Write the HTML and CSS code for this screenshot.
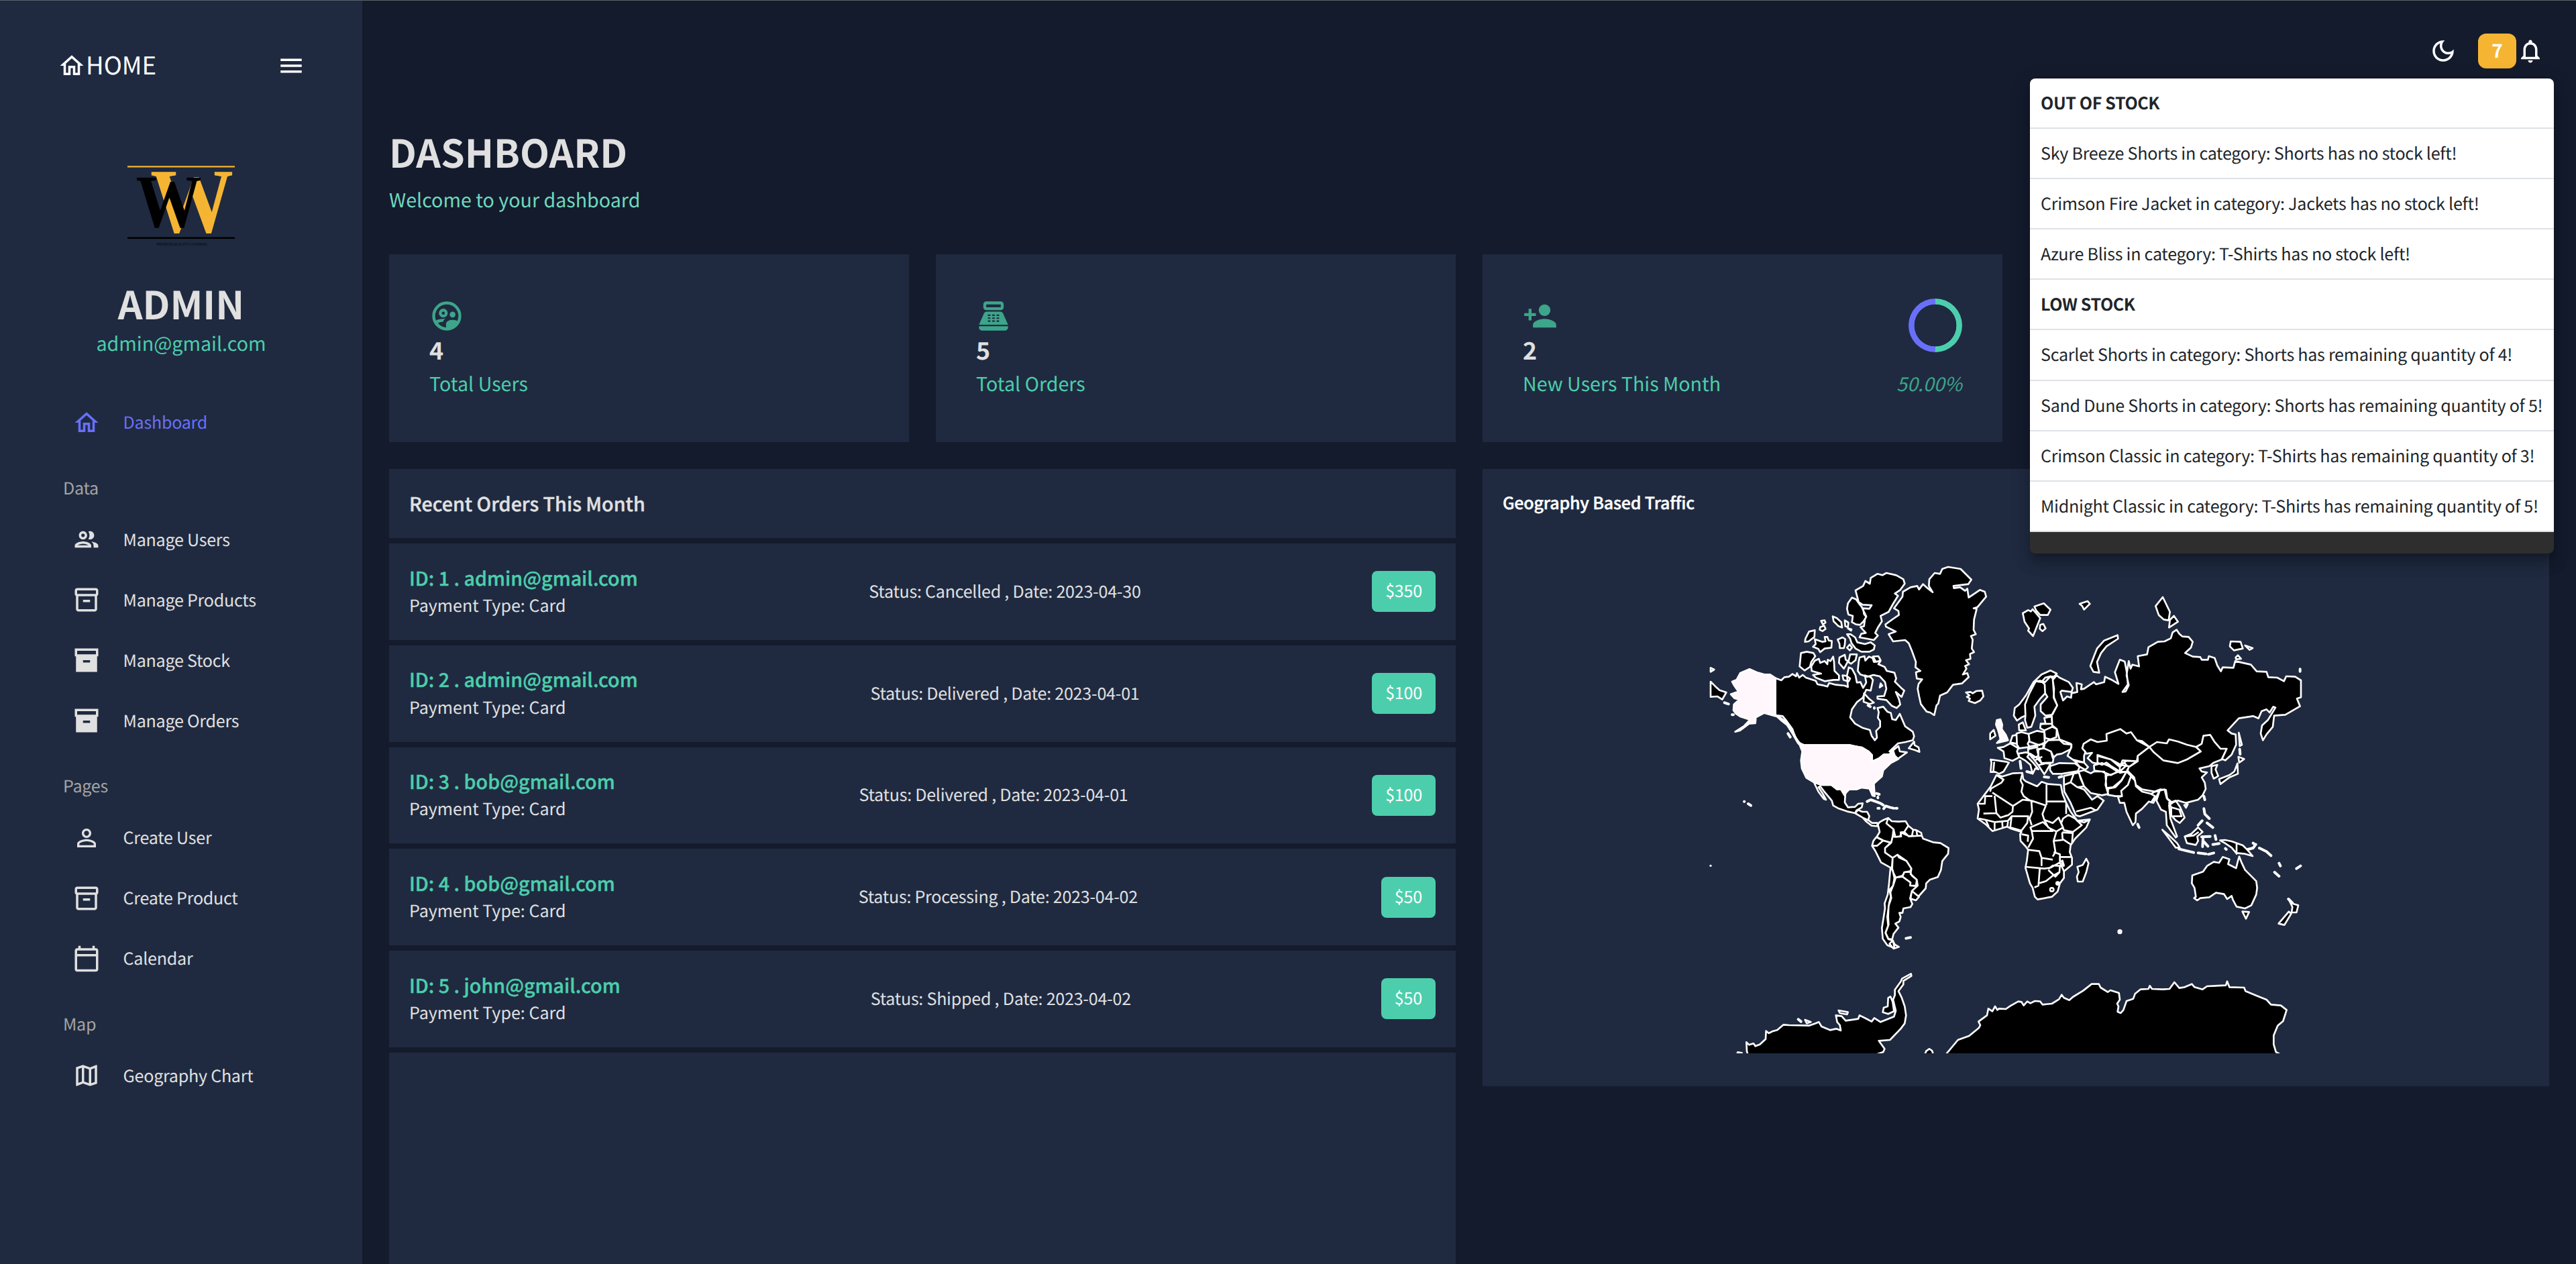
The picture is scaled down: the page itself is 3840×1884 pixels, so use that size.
FILE: index.html
```html
<!DOCTYPE html>
<html lang="en">
<head>
<meta charset="utf-8">
<title>Dashboard</title>
<link rel="stylesheet" href="styles.css">
</head>
<body>
<svg class="sprite" aria-hidden="true">
  <symbol id="i-home" viewBox="0 0 24 24"><path d="m12 5.69 5 4.5V18h-2v-6H9v6H7v-7.81l5-4.5M12 3 2 12h3v8h6v-6h2v6h6v-8h3L12 3z"/></symbol>
  <symbol id="i-menu" viewBox="0 0 24 24"><path d="M3 18h18v-2H3v2zm0-5h18v-2H3v2zm0-7v2h18V6H3z"/></symbol>
  <symbol id="i-people" viewBox="0 0 24 24"><path d="M9 13.75c-2.34 0-7 1.17-7 3.5V19h14v-1.75c0-2.33-4.66-3.5-7-3.5zM4.34 17c.84-.58 2.87-1.25 4.66-1.25s3.82.67 4.66 1.25H4.34zM9 12c1.93 0 3.5-1.57 3.5-3.5S10.93 5 9 5 5.5 6.57 5.5 8.5 7.07 12 9 12zm0-5c.83 0 1.5.67 1.5 1.5S9.83 10 9 10s-1.5-.67-1.5-1.5S8.17 7 9 7zm7.04 6.81c1.16.84 1.96 1.96 1.96 3.44V19h4v-1.75c0-2.02-3.5-3.17-5.96-3.44zM15 12c1.93 0 3.5-1.57 3.5-3.5S16.93 5 15 5c-.54 0-1.04.13-1.5.35.63.89 1 1.98 1 3.15s-.37 2.26-1 3.15c.46.22.96.35 1.5.35z"/></symbol>
  <symbol id="i-box" viewBox="0 0 24 24"><path d="M20 2H4c-1 0-2 .9-2 2v3.01c0 .72.43 1.34 1 1.69V20c0 1.1 1.1 2 2 2h14c.9 0 2-.9 2-2V8.7c.57-.35 1-.97 1-1.69V4c0-1.1-1-2-2-2zm-1 18H5V9h14v11zm1-13H4V4h16v3zM9 12h6v2H9z"/></symbol>
  <symbol id="i-box-solid" viewBox="0 0 24 24"><path d="M2 2v6.7h1V22h18V8.7h1V2H2zm13 12H9v-2h6v2zm5-7H4V4h16v3z"/></symbol>
  <symbol id="i-person" viewBox="0 0 24 24"><path d="M12 5.9c1.16 0 2.1.94 2.1 2.1s-.94 2.1-2.1 2.1S9.9 9.16 9.9 8s.94-2.1 2.1-2.1m0 9c2.97 0 6.1 1.46 6.1 2.1v1.1H5.9V17c0-.64 3.13-2.1 6.1-2.1M12 4C9.79 4 8 5.79 8 8s1.79 4 4 4 4-1.79 4-4-1.79-4-4-4zm0 9c-2.67 0-8 1.34-8 4v3h16v-3c0-2.66-5.33-4-8-4z"/></symbol>
  <symbol id="i-calendar" viewBox="0 0 24 24"><path d="M20 3h-1V1h-2v2H7V1H5v2H4c-1.1 0-2 .9-2 2v16c0 1.1.9 2 2 2h16c1.1 0 2-.9 2-2V5c0-1.1-.9-2-2-2zm0 18H4V10h16v11zm0-13H4V5h16v3z"/></symbol>
  <symbol id="i-map" viewBox="0 0 24 24"><path d="M20.5 3l-.16.03L15 5.1 9 3 3.36 4.9c-.21.07-.36.25-.36.48V20.5c0 .28.22.5.5.5l.16-.03L9 18.9l6 2.1 5.64-1.9c.21-.07.36-.25.36-.48V3.5c0-.28-.22-.5-.5-.5zM10 5.47l4 1.4v11.66l-4-1.4V5.47zm-5 .99l3-1.01v11.7l-3 1.16V6.46zm14 11.08l-3 1.01V6.86l3-1.16v11.84z"/></symbol>
  <symbol id="i-moon" viewBox="0 0 24 24"><path d="M9.37 5.51c-.18.64-.27 1.31-.27 1.99 0 4.08 3.32 7.4 7.4 7.4.68 0 1.35-.09 1.99-.27C17.45 17.19 14.93 19 12 19c-3.86 0-7-3.14-7-7 0-2.93 1.81-5.45 4.37-6.49zM12 3c-4.97 0-9 4.03-9 9s4.03 9 9 9 9-4.03 9-9c0-.46-.04-.92-.1-1.36-.98 1.37-2.58 2.26-4.4 2.26-2.98 0-5.4-2.42-5.4-5.4 0-1.81.89-3.42 2.26-4.4-.44-.06-.9-.1-1.36-.1z"/></symbol>
  <symbol id="i-bell" viewBox="0 0 24 24"><path d="M12 22c1.1 0 2-.9 2-2h-4c0 1.1.9 2 2 2zm6-6v-5c0-3.07-1.63-5.64-4.5-6.32V4c0-.83-.67-1.5-1.5-1.5s-1.5.67-1.5 1.5v.68C7.64 5.36 6 7.92 6 11v5l-2 2v1h16v-1l-2-2zm-2 1H8v-6c0-2.48 1.51-4.5 4-4.5s4 2.02 4 4.5v6z"/></symbol>
  <symbol id="i-users" viewBox="0 0 24 24"><circle cx="12" cy="12" r="9" fill="none" stroke="currentColor" stroke-width="2"/><circle cx="9.6" cy="10" r="2.05" fill="none" stroke="currentColor" stroke-width="2"/><circle cx="16" cy="11" r="2"/><path d="M3.6 15.6C5.3 14.5 7.6 14 9.6 14c.5 0 .9 0 1.4.1-.9.5-1.4 1.1-1.6 1.9-1.4 0-2.7.4-3.5.9 1.4 1.8 3.3 2.9 5.6 3.1V17.5c0-1.9 2.7-2.8 4.5-2.8 1.5 0 3.4.5 4.2 1.5-1.3 2.9-4.4 5-8.2 5-4 0-7-2.2-8.4-5.6z"/></symbol>
  <symbol id="i-register" viewBox="0 0 24 24"><path fill-rule="evenodd" d="M17 2H7c-1.1 0-2 .9-2 2v2c0 1.1.9 2 2 2h10c1.1 0 2-.9 2-2V4c0-1.1-.9-2-2-2zm0 4H7V4h10v2zm3 16H4c-1.1 0-2-.9-2-2v-1h20v1c0 1.1-.9 2-2 2zm-1.47-11.81C18.21 9.47 17.49 9 16.7 9H7.3c-.79 0-1.51.47-1.83 1.19L2 18h20l-3.47-7.81z"/><g stroke="#1f2a40" stroke-linecap="round"><path d="M8.5 11.5h1M11.5 11.5h1M14.5 11.5h1M8.5 13.5h1M11.5 13.5h1M14.5 13.5h1M8.5 15.5h1M11.5 15.5h1M14.5 15.5h1"/></g></symbol>
  <symbol id="i-add" viewBox="0 0 24 24"><path d="M15 12c2.21 0 4-1.79 4-4s-1.79-4-4-4-4 1.79-4 4 1.79 4 4 4zm-9-2V7H4v3H1v2h3v3h2v-3h3v-2H6zm9 4c-2.67 0-8 1.34-8 4v2h16v-2c0-2.66-5.33-4-8-4z"/></symbol>
</svg>

<div class="app">
  <aside class="sidebar">
    <div class="brand">
      <svg class="icon"><use href="#i-home"/></svg>
      <span class="brand-name">HOME</span>
      <svg class="icon brand-toggle"><use href="#i-menu"/></svg>
    </div>
    <svg class="logo" viewBox="170 196 200 200">
      <path d="M190 248.4h160" stroke="#f5b533" stroke-width="2.4"/>
      <text class="logo-letter" transform="translate(224 346) scale(.905 1)" font-size="137" fill="#f5b533">W</text>
      <text class="logo-letter" transform="translate(202.6 338.2) scale(.875 1)" font-size="112" fill="#000">W</text>
      <path d="M190 354.8h160" stroke="#000" stroke-width="2.4"/>
      <text class="logo-letter" x="233" y="366.4" font-size="6" textLength="76" lengthAdjust="spacingAndGlyphs" fill="#0b0f18">PREMIUM QUALITY CLOTHING</text>
    </svg>
    <div class="user-name">ADMIN</div>
    <div class="user-mail">admin@gmail.com</div>
    <nav class="menu">
      <a class="item active"><svg class="icon"><use href="#i-home"/></svg><span>Dashboard</span></a>
      <div class="group">Data</div>
      <a class="item"><svg class="icon"><use href="#i-people"/></svg><span>Manage Users</span></a>
      <a class="item"><svg class="icon"><use href="#i-box"/></svg><span>Manage Products</span></a>
      <a class="item"><svg class="icon"><use href="#i-box-solid"/></svg><span>Manage Stock</span></a>
      <a class="item"><svg class="icon"><use href="#i-box-solid"/></svg><span>Manage Orders</span></a>
      <div class="group">Pages</div>
      <a class="item"><svg class="icon"><use href="#i-person"/></svg><span>Create User</span></a>
      <a class="item"><svg class="icon"><use href="#i-box"/></svg><span>Create Product</span></a>
      <a class="item"><svg class="icon"><use href="#i-calendar"/></svg><span>Calendar</span></a>
      <div class="group">Map</div>
      <a class="item"><svg class="icon"><use href="#i-map"/></svg><span>Geography Chart</span></a>
    </nav>
  </aside>

  <main class="main">
    <div class="topbar">
      <svg class="icon moon"><use href="#i-moon"/></svg>
      <span class="count">7</span>
      <svg class="icon"><use href="#i-bell"/></svg>
    </div>
    <h1 class="title">DASHBOARD</h1>
    <p class="subtitle">Welcome to your dashboard</p>

    <div class="grid">
      <section class="card">
        <div class="stat"><svg class="stat-icon"><use href="#i-users"/></svg><b>4</b><span>Total Users</span></div>
      </section>
      <section class="card">
        <div class="stat"><svg class="stat-icon"><use href="#i-register"/></svg><b>5</b><span>Total Orders</span></div>
      </section>
      <section class="card">
        <div class="stat"><svg class="stat-icon"><use href="#i-add"/></svg><b>2</b><span>New Users This Month</span></div>
        <div class="progress"><div class="ring"></div><i>50.00%</i></div>
      </section>

      <section class="orders">
        <h2 class="orders-title">Recent Orders This Month</h2>
        <div class="order"><div><div class="order-id">ID: 1 . admin@gmail.com</div><div class="order-pay">Payment Type: Card</div></div><div class="order-status">Status: Cancelled , Date: 2023-04-30</div><div class="price">$350</div></div>
        <div class="order"><div><div class="order-id">ID: 2 . admin@gmail.com</div><div class="order-pay">Payment Type: Card</div></div><div class="order-status">Status: Delivered , Date: 2023-04-01</div><div class="price">$100</div></div>
        <div class="order"><div><div class="order-id">ID: 3 . bob@gmail.com</div><div class="order-pay">Payment Type: Card</div></div><div class="order-status">Status: Delivered , Date: 2023-04-01</div><div class="price">$100</div></div>
        <div class="order"><div><div class="order-id">ID: 4 . bob@gmail.com</div><div class="order-pay">Payment Type: Card</div></div><div class="order-status">Status: Processing , Date: 2023-04-02</div><div class="price">$50</div></div>
        <div class="order"><div><div class="order-id">ID: 5 . john@gmail.com</div><div class="order-pay">Payment Type: Card</div></div><div class="order-status">Status: Shipped , Date: 2023-04-02</div><div class="price">$50</div></div>
      </section>

      <section class="geo">
        <h2 class="geo-title">Geography Based Traffic</h2>
        <svg class="map" viewBox="2210 800 1590 770">
          <!-- Americas and Greenland -->
          <g transform="translate(2520 820) scale(.33333)">
            <path class="land" d="M1083 188 1066 160 1068 130 1092 102 1116 106 1126 84 1152 75 1208 84 1256 132 1242 152 1176 160 1178 170 1206 166 1228 182 1238 172 1244 212 1294 178 1316 186 1322 208 1284 254 1266 260 1280 262 1268 310 1266 356 1276 376 1254 384 1262 400 1258 440 1268 456 1250 464 1252 486 1232 492 1246 510 1228 518 1234 530 1218 556 1238 550 1244 568 1214 596 1174 602 1148 636 1116 650 1108 686 1100 694 1090 738 1072 726 1056 722 1030 688 1022 652 1016 620 1020 598 1036 578 1012 574 1008 546 1028 540 1006 524 1008 500 990 450 976 416 960 402 906 408 886 376 918 364 874 342 872 332 908 306 932 290 930 272 910 260 948 208 950 186 984 166 1014 160 1022 176 1040 152 1060 170z
            M1232 636 1252 634 1262 640 1278 630 1304 628 1310 654 1296 672 1272 684 1244 674 1250 664 1236 656 1248 650z
            M738 180 772 160 782 138 802 150 806 124 836 106 858 112 876 102 920 112 952 130 958 150 938 178 914 194 928 204 906 240 886 276 850 294 856 318 838 346 826 370 838 382 820 402 790 396 756 390 764 374 784 370 760 344 776 340 780 310 786 296 768 260 800 262 810 246 770 244 752 232z
            M722 212 740 220 756 242 772 262 776 286 786 298 774 318 758 334 740 332 722 322 726 294 706 288 700 262 704 238z
            M636 296 654 304 674 322 678 346 662 340 640 318zM690 314 706 324 704 344 692 340zM704 350 720 354 718 360zM584 316 600 314 604 324 592 332zM580 344 598 338 604 352 590 362 578 356z
            M530 364 556 358 554 388 528 408 512 410 514 396zM556 398 590 410 604 408 600 388 612 388 618 404 632 406 630 436 600 440 580 456 572 442 548 432 560 420z
            M658 400 680 390 692 398 690 422 686 438 668 438 666 418zM700 436 712 422 722 436 712 448z
            M700 376 716 376 736 390 746 412 780 420 806 412 824 426 820 444 800 454 764 454 738 440 720 416 714 396z
            M494 460 520 454 550 460 558 474 540 500 534 522 510 538 488 520z
            M540 520 556 494 574 486 580 504 600 496 612 510 614 490 626 496 638 476 642 500 644 540 664 560 664 580 640 580 600 586 560 570 548 558 584 552 542 540z
            M666 480 690 468 694 490 704 496 694 516 686 530 664 504zM714 466 744 466 738 492 718 508 706 500zM680 560 698 562 714 574 706 588 684 580z
            M756 480 778 474 782 494 798 476 814 482 820 500 850 496 840 510 868 522 878 540 912 548 920 574 914 588 946 620 956 628 944 656 918 634 932 666 938 690 922 706 900 696 876 670 836 664 836 654 866 652 876 620 870 590 846 564 818 558 790 566 760 556 748 540 752 500z
            M776 640 796 662 820 682 802 688 774 678zM850 596 858 606 846 614zM816 476 840 474 850 492 830 500z
            M380 572 406 582 420 568 440 566 456 554 472 564 476 550 486 570 502 558 516 570 560 584 568 600 590 604 612 610 620 594 650 602 690 606 704 612 700 560 708 524 722 530 738 560 744 592 760 590 772 616 786 592 780 560 806 568 816 580 806 628 786 624 770 660 744 680 722 712 714 748 736 776 768 794 802 804 810 830 824 850 834 838 830 808 848 790 848 764 838 750 842 724 836 706 862 700 880 722 896 728 902 756 918 760 936 732 960 788 994 812 1000 832 994 850 962 858 928 864 890 900 902 898 930 876 936 900 968 904 926 934 912 918 890 914 864 914 844 930 810 946 812 916 796 900 766 882 730 876 712 872 510 872 486 862 464 828 456 800 430 764 412 742 380 738z
            M1000 856 1002 872 1020 882 1024 902 1004 894 976 886z
            M90 588 110 608 130 626 160 636 142 668 120 654 90 656zM90 526 106 534 90 544z
            M552 1038 586 1050 630 1050 656 1070 672 1068 692 1098 690 1128 704 1150 736 1148 750 1134 770 1132 766 1150 742 1164 736 1176 700 1168 660 1154 638 1142 632 1120 600 1082 580 1056 572 1060 592 1090 606 1116 596 1112 572 1080z
            M736 1176 750 1162 768 1170 790 1170 800 1190 794 1208 770 1196zM770 1196 796 1208 812 1220 836 1220 836 1234 810 1232 784 1212z
            M846 1216 864 1206 884 1198 876 1222 908 1248 904 1280 898 1306 894 1308 860 1298 832 1284 846 1260 838 1226z
            M884 1198 900 1212 930 1214 962 1212 974 1232 956 1260 942 1262 938 1280 916 1282 908 1248 876 1222z
            M974 1232 996 1250 1010 1252 1032 1264 1034 1276 976 1280 956 1260zM996 1250 990 1278M1010 1252 1014 1276
            M832 1282 862 1298 834 1322 812 1322 818 1300zM812 1322 834 1322 862 1298 898 1308 870 1332 870 1352 904 1376 902 1424 852 1396 826 1344z
            M898 1306 904 1280 916 1282 942 1280 940 1262 976 1278 1034 1276 1040 1290 1084 1306 1118 1310 1154 1332 1152 1358 1126 1390 1120 1430 1106 1462 1070 1474 1054 1490 1052 1512 1020 1548 990 1524 1016 1500 1012 1474 984 1448 988 1424 966 1390 932 1374 926 1362 904 1376 870 1352 870 1332z
            M904 1376 926 1362 966 1390 988 1424 982 1438 956 1440 948 1456 918 1464 908 1444 900 1424zM956 1440 982 1436 990 1456 1012 1474 1008 1502 982 1500 984 1486 948 1460z
            M918 1464 948 1460 984 1486 982 1500 1016 1500 990 1524 982 1558 992 1582 984 1596 952 1602 948 1622 934 1622 940 1640 934 1660 916 1670 930 1688 908 1716 902 1740 884 1738 872 1712 884 1680 880 1640 888 1580 896 1550 890 1520 906 1500z
            M990 1524 1022 1550 1008 1566 984 1558z
            M894 1424 904 1430 912 1466 906 1500 894 1530 898 1556 886 1590 884 1640 886 1674 872 1710 886 1740 906 1746 912 1780 880 1766 860 1738 856 1690 864 1640 870 1600 868 1580 882 1540 888 1490zM904 1746 914 1764 932 1774 908 1782 890 1760z
            M260 2270 252 2240 250 2200 262 2212 282 2206 290 2218 310 2210 336 2186 338 2150 350 2160 366 2152 388 2146 416 2122 440 2124 530 2126 560 2116 574 2110 586 2130 624 2146 652 2140 672 2148 668 2124 656 2110 650 2080 676 2084 694 2104 750 2096 756 2080 784 2094 810 2108 822 2092 850 2110 910 2086 918 2060 906 2010 914 1990 914 1966 940 1930 946 1916 986 1894 988 1904 952 1926 952 1942 930 1972 944 2000 958 2040 964 2080 958 2116 940 2140 892 2190 842 2194 868 2230 862 2244 838 2252 830 2270z
            M884 2002 894 1996 904 2020 910 2062 884 2074 860 2066 864 2046 882 2040zM662 2058 704 2066 700 2076 668 2070zM512 2100 538 2110 520 2116zM1048 2256 1054 2240 1068 2230 1080 2238 1086 2256z"/>
            <path class="land hot" d="M510 872 712 872 740 878 768 884 798 902 812 918 812 946 844 932 864 914 890 914 904 890 914 920 930 934 896 952 862 984 856 1012 820 1044 824 1100 814 1098 800 1066 764 1062 742 1070 710 1070 696 1084 690 1098 672 1068 656 1070 630 1050 586 1050 552 1038 518 1018 498 976 494 940 500 900 490 876z
            M380 572 356 556 330 556 296 546 264 532 222 550 206 580 186 588 196 606 214 632 180 644 196 662 218 668 194 690 192 716 202 730 222 744 248 752 266 758 240 786 200 812 222 806 262 776 290 774 292 748 330 728 364 738 400 748 428 768 456 804 474 846 492 866 500 884 480 862 456 820 432 782 404 760 380 738z"/>
            <path class="isle" d="M436 820 446 836M240 1124h1M258 1134 270 1142M152 682 170 688M186 736h6M790 1124 806 1116 850 1132 862 1140M838 1154h6M864 1156 874 1144 892 1150 908 1154M918 1154h6M832 1088 844 1092M838 1104v4M964 1736 984 1732M794 694 804 700M822 704v3M482 2098 494 2108M212 2247 228 2250"/>
            <circle cx="90" cy="1411" r="5" fill="#fff"/>
          </g>
          <!-- Europe, Asia, Africa -->
          <g transform="translate(2960 820) scale(.33333)">
            <path class="land" d="M318 560 330 570 372 590 390 616 384 634 340 628 334 634 346 672 364 654 382 660 384 640 410 634 406 594 430 600 426 622 440 620 484 590 494 600 530 590 534 566 560 578 594 598 578 546 600 490 622 498 630 540 636 600 612 634 626 632 640 604 630 560 636 520 640 496 648 530 656 512 686 520 680 474 722 466 728 434 770 410 800 408 828 394 836 368 854 356 866 374 880 386 908 388 926 410 918 436 892 460 926 476 960 478 966 490 994 490 998 474 1024 482 1036 516 1052 542 1060 524 1108 526 1116 496 1186 512 1212 542 1256 544 1264 568 1304 570 1334 586 1344 564 1384 566 1410 582 1410 658 1392 664 1406 698 1340 736 1290 740 1284 790 1256 824 1240 850 1230 820 1236 784 1262 760 1296 704 1286 700 1270 726 1256 712 1234 720 1220 752 1196 742 1132 752 1082 806 1100 820 1118 824 1120 870 1100 914 1072 940 1056 934 1078 888 1050 888 1024 858 1004 826 974 830 966 866 940 880 900 870 860 856 820 846 810 864 766 858 732 880 700 854 676 850 650 814 630 820 602 800 540 822 542 852 500 858 470 846 438 866 432 886 446 902 440 920 440 950 400 944 366 920 384 880 382 866 330 846 318 800 298 784 294 740 320 694 304 660 306 620 300 580z
            M130 706 150 690 180 650 214 590 250 556 290 538 318 552 306 566 290 564 266 570 250 590 224 586 196 640 176 690 178 740 160 748 140 762 126 740z
            M178 740 176 690 196 640 224 586 246 584 264 600 266 640 244 664 218 700 222 740 204 790 186 794 176 760z
            M246 584 266 590 290 564 300 575 306 660 320 694 298 736 268 740 246 720 246 690 276 656 266 640 264 600z
            M148 780 166 770 180 806 150 806zM262 750 296 744 298 790 318 800 316 836 290 846 266 840 262 806 244 796 246 776 268 776zM246 778 296 776M262 806 298 790
            M138 820 160 814 192 822 196 850 188 866 196 880 150 886 140 870zM192 822 230 808 262 814 264 860 240 872 196 856zM264 866 280 850 330 848 350 866 384 870 380 890 340 910 318 914 300 930 292 900 260 886z
            M230 890 260 886 292 900 304 926 300 950 250 952 236 920zM190 880 230 872 260 866 256 886 236 892 236 920 210 930 190 905zM190 890 232 880
            M146 910 180 904 196 910 186 924 212 950 236 980 222 976 210 1000 200 960 176 940 150 925zM200 910 230 930 250 952 290 955 270 990 262 1002 240 968 216 936zM220 940 250 925M240 960 262 955
            M54 884 80 880 110 864 146 886 140 900 150 926 120 942 84 930 80 900zM110 860 120 830 138 826 140 866zM22 936 90 946 104 950 80 990 60 1000 44 992 22 992 26 950zM38 950 34 990M20 820 36 804 44 830 20 846z
            M288 966 330 952 400 954 420 970 412 988 340 1000 300 1000 288 984zM394 938 440 950 458 970 446 982 420 968z
            M438 866 470 846 500 858 542 852 540 822 602 800 630 820 650 814 676 850 732 880 680 920 676 944 630 942 604 960 560 936 500 920 500 955 478 950 456 930 476 906 450 910 446 902 432 886z
            M500 916 560 936 600 970 620 950 630 962 600 990 560 965 540 950 520 960 500 950zM484 962 520 952 550 965 590 990 560 1006 520 990 486 986zM600 970 612 940 676 944 640 970 630 990 600 996zM600 960 640 966
            M416 990 440 984 470 998 484 990 530 990 540 1010 536 1050 548 1090 520 1096 470 1086 440 1056 424 1020zM536 1008 560 1004 590 992 630 990 606 1030 570 1060 540 1064zM548 1066 580 1060 608 1030 630 990 650 1010 636 1050 606 1076 610 1100 580 1100 546 1094z
            M636 1050 650 1012 668 1030 672 1056 700 1080 740 1090 760 1078 780 1070 770 1090 750 1130 730 1124 700 1156 672 1178 670 1216 658 1230 630 1170 620 1130 600 1130 592 1104 610 1100 606 1076zM734 1088 758 1100 740 1128
            M732 880 752 904 794 940 860 952 900 936 962 900 942 880 966 866 974 830 1004 826 1024 858 1050 888 1078 888 1056 936 1020 950 1000 966 956 976 966 990 990 994 966 1016 980 1040 984 1068 970 1096 950 1116 896 1130 860 1120 830 1130 810 1110 800 1070 760 1080 700 1070 672 1050 664 1016 634 986 640 970 680 944 680 920z
            M732 880 766 858 810 864 820 846 860 856 900 870 940 880 962 900 900 936 860 952 794 940 752 904z
            M1010 966 1036 960 1028 980 1040 1010 1020 1022 1010 996zM1130 924 1156 934 1134 950zM1126 954 1128 1000 1090 1016 1050 1046 1044 1024 1090 1006 1112 990zM1132 816 1146 870 1136 876z
            M780 1070 806 1072 812 1110 836 1130 820 1140 826 1200 856 1280 850 1285 810 1230 806 1170 784 1160 764 1120zM820 1130 850 1120 870 1150 890 1196 868 1220 850 1208 830 1186 830 1150zM830 1150 866 1160 876 1190 840 1190
            M888 1140 904 1136 896 1152zM790 1250 820 1276 856 1310 868 1330 850 1330 820 1290zM890 1280 920 1268 950 1240 970 1260 946 1280 950 1300 940 1318 900 1310zM896 1280 930 1276 950 1262
            M350 1050 380 1038 410 1060 440 1070 476 1116 500 1100 528 1120 500 1160 420 1190 404 1186 380 1130 352 1080zM408 1168 470 1152 490 1162M350 1010 416 994 440 1056 410 1060 380 1038 350 1050zM380 1038 394 1000
            M166 282 190 268 202 274 210 264 244 304 212 384 190 360 194 350 174 320zM218 252 260 238 290 266 278 290 244 290 226 270zM244 334 258 330 268 350 254 362 242 352zM420 240 456 228 466 240 440 266 432 250z
            M590 380 592 396 540 430 516 460 498 500 508 548 482 544 468 518 486 470 498 440 530 404zM792 210 824 276 818 314 796 310 774 290 760 250zM842 294 860 320 820 346 824 312z
            M1096 408 1140 410 1150 440 1110 448 1092 430zM1160 426 1194 438 1180 446zM1118 480 1128 470 1142 486 1120 488z
            M22 1058 48 1006 76 1012 120 998 164 996 168 1024 180 1034 230 1056 250 1036 280 1046 336 1050 344 1090 360 1130 380 1170 410 1210 466 1204 450 1240 400 1290 380 1320 376 1350 386 1376 386 1406 350 1436 350 1466 332 1490 322 1526 296 1550 232 1562 220 1550 210 1510 198 1490 178 1420 184 1390 190 1340 180 1326 156 1300 154 1270 160 1260 110 1244 96 1236 70 1244 30 1256 0 1226 -36 1200 -30 1160 -36 1134 -10 1100z"/>
            <path class="line" d="M48 1006 80 1026 70 1040 24 1066 20 1080M-32 1134H-4L-2 1100H30M30 1084 122 1144 166 1116 204 1120M40 1098 48 1176-10 1178M164 1000 156 1030 166 1050 160 1080 170 1100 198 1120M272 1048V1140M204 1120 270 1142M272 1124H356M204 1120 208 1170 196 1200 206 1230M270 1140 254 1180 262 1206M122 1144 120 1170 100 1186 84 1190M116 1190H190L186 1220 160 1254 110 1240zM206 1256 200 1240 256 1216 300 1256 240 1256zM262 1206 300 1220 326 1196 346 1240 316 1258 280 1240zM346 1200 370 1184 400 1200 430 1230 390 1260 350 1252 338 1220zM360 1130V1180M410 1210 440 1218 466 1204M390 1262 386 1310M342 1262 388 1265M342 1262 344 1292 384 1318M206 1256 212 1290 190 1330M160 1270 190 1276 188 1304M316 1260 304 1300 344 1296M304 1300 312 1350 300 1370M190 1340 240 1346 250 1376 300 1384M178 1416 262 1424 290 1420M250 1376V1412M290 1420 332 1396V1360L304 1350M334 1372H386M242 1424 236 1500 218 1508M236 1490 270 1480 300 1456 330 1440M280 1426 300 1410 332 1412 330 1440 312 1460 280 1430M332 1396 350 1436M40 1220V1250M74 1214 76 1244M100 1214 96 1240M-30 1200 0 1206 40 1216 100 1210 116 1190M48 1176 66 1196 96 1186M0 1206 14 1236"/>
            <path class="land hot" d="M50 760 66 756 74 780 72 800 90 826 100 850 50 862 66 846 60 820 54 800 46 780z"/>
            <path class="isle" d="M1406 532V542M184 990 206 996M154 944 158 976M262 1014 282 1016M328 1016 340 1012M1136 890 1138 912M976 1100 980 1116M680 1226 686 1240M976 1156 980 1180 1000 1200M990 1220 1016 1240M968 1210 950 1230"/>
            <circle cx="296" cy="1518" r="8" fill="none" stroke="#fff" stroke-width="8"/><circle cx="322" cy="1490" r="10" fill="#fff"/><path class="isle" d="M342 1390 348 1410"/>
          </g>
          <!-- Oceania and East Antarctica -->
          <g transform="translate(2980 1240) scale(.33333)">
            <path class="land" d="M988 38 1010 36 1040 42 1090 60 1110 80 1134 108 1100 98 1060 94 1040 70 1010 50zM1062 54V98
            M864 194 912 178 930 152 960 134 984 138 1000 112 1030 122 1024 144 1060 162 1068 130 1074 110 1084 136 1100 170 1150 220 1154 250 1150 280 1128 328 1100 342 1062 334 1046 304 1040 286 1020 300 1006 278 970 272 940 292 900 296 886 306 872 296 880 290 874 250 862 230z
            M1088 356 1118 358 1104 388zM1294 298 1316 322 1338 328 1330 360 1308 360 1312 336zM1296 356 1306 366 1276 416 1250 410zM350 156 374 148 390 120 400 140 390 180 374 222 352 222 348 200 356 180z
            M-234 990-184 930-134 912-90 876-84 864-92 848-54 820-48 790-30 802-18 780-8 796 0 790 30 792 50 778 86 758 100 760 110 776 126 758 140 766 160 756 184 758 194 772 236 768 268 748 280 728 290 742 314 752 330 738 376 710 414 680 446 680 454 696 486 716 498 708 536 720 540 750 528 768 534 780 530 804 544 810 556 796 570 756 600 746 608 724 632 704 668 702 674 688 684 702 732 704 762 702 784 672 806 698 830 694 862 680 874 694 910 704 930 690 1014 686 1020 668 1030 694 1096 696 1102 712 1160 736 1196 750 1216 772 1260 776 1286 796 1270 846 1246 866 1228 910 1228 950 1238 984 1260 996 1260 1010-234 1010z"/>
            <path class="isle" d="M804 76 870 92M890 94 925 98M936 100 960 94M906 22 944 20M912 30 910 66M916 44 934 64M966 16 970 34M956 56 984 52M1112 78 1136 72 1148 56M1136 50 1144 56M1164 72 1196 88 1216 106M1252 140 1258 152M1232 180 1252 198M1330 164 1348 152M1012 74 1016 78M1294 300 1312 318"/>
            <circle cx="540" cy="446" r="11" fill="#fff"/>
          </g>
        </svg>
      </section>
    </div>
  </main>

  <div class="popup">
    <div class="popup-row head">OUT OF STOCK</div>
    <div class="popup-row">Sky Breeze Shorts in category: Shorts has no stock left!</div>
    <div class="popup-row">Crimson Fire Jacket in category: Jackets has no stock left!</div>
    <div class="popup-row">Azure Bliss in category: T-Shirts has no stock left!</div>
    <div class="popup-row head">LOW STOCK</div>
    <div class="popup-row">Scarlet Shorts in category: Shorts has remaining quantity of 4!</div>
    <div class="popup-row">Sand Dune Shorts in category: Shorts has remaining quantity of 5!</div>
    <div class="popup-row">Crimson Classic in category: T-Shirts has remaining quantity of 3!</div>
    <div class="popup-row">Midnight Classic in category: T-Shirts has remaining quantity of 5!</div>
  </div>
</div>
</body>
</html>
```
FILE: styles.css
```css
* { box-sizing: border-box; }

body {
  margin: 0;
  height: 1884px;
  overflow: hidden;
  background: #141b2d;
  color: #e0e0e0;
  font-family: "Source Sans Pro", "Noto Sans CJK SC", sans-serif;
  font-size: 25.07px;
  text-rendering: geometricPrecision;
}

.sprite { display: none; }

.app {
  position: relative;
  display: flex;
  height: 1884px;
  overflow: hidden;
  border-top: 1px solid #58636a;
}

.icon { width: 42px; height: 42px; fill: currentColor; flex: none; }

/* Sidebar */
.sidebar {
  width: 540px;
  flex: none;
  background: #1f2a40;
  display: flex;
  flex-direction: column;
  align-items: center;
}
.brand {
  display: flex;
  align-items: center;
  align-self: stretch;
  height: 194px;
  padding: 0 85px 0 86px;
  color: #fff;
}
.brand-name { font-size: 36.6px; line-height: 48px; padding-bottom: 5px; }
.brand-toggle { margin-left: auto; }
.logo { width: 200px; height: 200px; margin-top: 1px; }
.logo-letter { font-family: "Liberation Serif", serif; font-weight: 700; }
.user-name { margin-top: 24px; font-size: 57.3px; line-height: 64px; font-weight: 700; }
.user-mail { margin-top: 8px; font-size: 28.65px; line-height: 40px; color: #4cceac; }

.menu { align-self: stretch; margin-top: 52.5px; letter-spacing: -.25px; }
.item {
  display: flex;
  align-items: center;
  gap: 34px;
  height: 90px;
  padding-left: 107.6px;
}
.item span { line-height: 40px; padding-bottom: 1px; }
.item.active { color: #6870fa; }
.group { height: 84.5px; padding: 32px 0 0 94px; line-height: 40px; color: #a3a3a3; }

/* Main column */
.main { flex: 1; padding: 0 40px; }
.topbar {
  display: flex;
  justify-content: flex-end;
  align-items: center;
  height: 150px;
  padding-right: 7px;
  color: #fff;
}
.moon { margin-right: 31px; }
.count {
  width: 57px;
  height: 52px;
  border-radius: 12px;
  background: #f5b533;
  font-size: 28px;
  line-height: 50px;
  font-weight: 700;
  text-align: center;
}
.title { margin: 43px 0 0; font-size: 57.3px; line-height: 64px; font-weight: 700; }
.subtitle { margin: 20px 0 0; font-size: 28.65px; line-height: 40px; color: #70d8bd; }

.grid {
  display: grid;
  grid-template-columns: repeat(4, 1fr);
  grid-template-rows: 280px 920px;
  gap: 40px;
  margin-top: 61px;
}

.card {
  display: flex;
  justify-content: space-between;
  padding: 66px 60px 0;
  background: #1f2a40;
}
.stat { display: flex; flex-direction: column; }
.stat-icon { width: 52px; height: 52px; fill: #3da58a; color: #3da58a; }
.stat b { margin-top: 4px; font-size: 35.8px; line-height: 40px; }
.stat span { margin-top: 11px; font-size: 28.65px; line-height: 40px; color: #4cceac; }
.progress { display: flex; flex-direction: column; align-items: flex-end; }
.ring {
  width: 80px;
  height: 80px;
  border-radius: 50%;
  background:
    radial-gradient(#1f2a40 55%, transparent 56%),
    conic-gradient(transparent 0deg 180deg, #6870fa 180deg 360deg),
    #4cceac;
}
.progress i { margin-top: 27px; font-size: 28.65px; line-height: 40px; color: #3da58a; }

/* Recent orders */
.orders { grid-column: span 2; height: 1190px; background: #1f2a40; }
.orders-title {
  margin: 0;
  height: 111px;
  padding: 32px 30px 0;
  border-bottom: 8px solid #141b2d;
  font-size: 28.65px;
  line-height: 39px;
  font-weight: 500;
  -webkit-text-stroke: .4px currentColor;
}
.order {
  display: flex;
  justify-content: space-between;
  align-items: center;
  height: 151.75px;
  padding: 0 30px;
  border-bottom: 8px solid #141b2d;
}
.order-id { font-size: 28.65px; line-height: 41.2px; font-weight: 500; color: #4cceac; -webkit-text-stroke: .4px currentColor; }
.order-pay { line-height: 40.4px; padding-bottom: 1px; }
.order-status { line-height: 40px; padding-bottom: 2px; letter-spacing: -.25px; }
.price {
  height: 61px;
  padding: 0 20px;
  border-radius: 8px;
  background: #4cceac;
  color: #fff;
  line-height: 59px;
  letter-spacing: -.2px;
}

/* Geography */
.geo { grid-column: span 2; background: #1f2a40; }
.geo-title { margin: 0; padding: 32px 30px 0; font-size: 25.07px; line-height: 36px; font-weight: 500; letter-spacing: -.2px; color: #fff; -webkit-text-stroke: .4px currentColor; }
.map { display: block; width: 1590px; height: 770px; margin-top: 33px; }
.land { fill: #000; stroke: #fff; stroke-width: 8; stroke-linejoin: round; stroke-linecap: round; }
.hot { fill: #fff7fb; }
.line { fill: none; stroke: #fff; stroke-width: 8; stroke-linejoin: round; }
.isle { fill: none; stroke: #fff; stroke-width: 12; stroke-linecap: round; stroke-linejoin: round; }

/* Notification menu */
.popup {
  position: absolute;
  top: 116px;
  right: 33px;
  width: 781px;
  height: 708px;
  border-radius: 8px;
  overflow: hidden;
  background: #2e2e2e;
  color: #212529;
  box-shadow: 0 10px 10px -6px rgba(0,0,0,.2), 0 16px 20px 2px rgba(0,0,0,.14), 0 6px 28px 4px rgba(0,0,0,.12);
}
.popup-row {
  height: 75.1px;
  padding: 0 16px;
  border-bottom: 2px solid #dee2e6;
  background: #fff;
  line-height: 73px;
  letter-spacing: -.25px;
  white-space: nowrap;
}
.popup-row.head { font-weight: 700; letter-spacing: -.4px; }
```
